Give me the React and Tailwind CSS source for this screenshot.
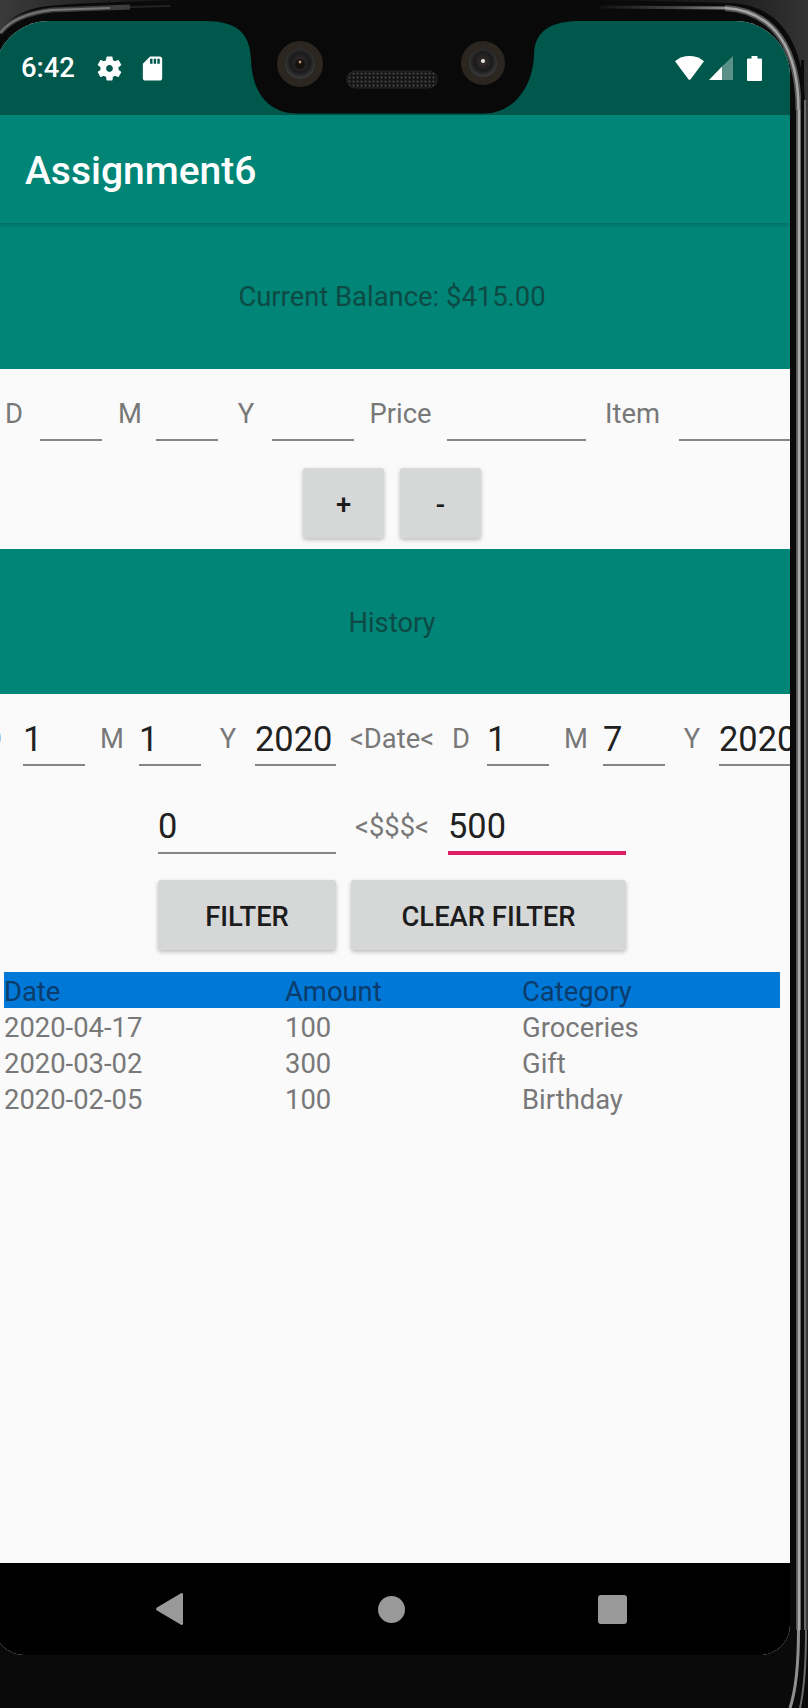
import React from 'react';

const rows = [
  { date: '2020-04-17', amount: '100', category: 'Groceries' },
  { date: '2020-03-02', amount: '300', category: 'Gift' },
  { date: '2020-02-05', amount: '100', category: 'Birthday' },
];

const Label = ({ className = 'w-[54px] justify-center', children }) => (
  <div className={`flex shrink-0 self-end mb-[11px] text-[27.4px] leading-[32px] text-[#787878] ${className}`}>{children}</div>
);

const Field = ({ width, value, focused, lead = 'leading-[40px]' }) => (
  <div
    className={`shrink-0 self-end h-[47px] text-[34.4px] text-[#212121] whitespace-nowrap overflow-hidden ${lead} ${width} ${
      focused ? 'border-b-4 border-[#e01e63] -mb-px' : 'border-b-2 border-[#858585]'
    }`}
  >
    {value}
  </div>
);

const ActionButton = ({ width, children }) => (
  <button className={`h-[70px] pt-[5px] rounded-[3px] bg-[#d6d7d7] text-[27.4px] font-medium text-[#1c1c1c] shadow-[0_2px_4px_rgba(0,0,0,0.25)] ${width}`}>
    {children}
  </button>
);

const DeviceFrame = () => (
  <svg className="absolute left-0 top-0 pointer-events-none" width="808" height="1708" viewBox="0 0 808 1708" fill="none">
    <defs>
      <linearGradient id="fadeLeft" x1="0" y1="0" x2="1" y2="0">
        <stop offset="0" stopColor="#111" />
        <stop offset="0.6" stopColor="#444" />
        <stop offset="1" stopColor="#8a8a8a" />
      </linearGradient>
      <linearGradient id="topLeft" x1="0" y1="0" x2="1" y2="0">
        <stop offset="0" stopColor="#3a3a3a" />
        <stop offset="1" stopColor="#0d0d0d" />
      </linearGradient>
      <linearGradient id="topRight" x1="0" y1="0" x2="1" y2="0">
        <stop offset="0" stopColor="#0d0d0d" />
        <stop offset="0.7" stopColor="#222" />
        <stop offset="1" stopColor="#333" />
      </linearGradient>
      <pattern id="mesh" width="4" height="4" patternUnits="userSpaceOnUse">
        <rect width="4" height="4" fill="#161616" />
        <circle cx="1.5" cy="1.5" r="1" fill="#4a4a4a" />
      </pattern>
      <radialGradient id="lens" cx="0.5" cy="0.45" r="0.55">
        <stop offset="0" stopColor="#3a3230" />
        <stop offset="0.6" stopColor="#1b1a1c" />
        <stop offset="1" stopColor="#3d3d40" />
      </radialGradient>
    </defs>

    {/* notch */}
    <path
      d="M205 21 H580 C552 21 534 30 534 56 C532 90 512 113 484 113.5 H296 C268 113 252 92 251 60 C250 32 236 21 205 21 Z"
      fill="#090909"
    />
    <rect x="347" y="71" width="90" height="17" rx="8" fill="url(#mesh)" stroke="#262626" />
    <circle cx="300" cy="64" r="23" fill="#2b261f" />
    <circle cx="300" cy="64" r="15" fill="url(#lens)" />
    <circle cx="300" cy="64" r="5" fill="#15110f" />
    <circle cx="300" cy="62" r="1.4" fill="#c09070" />
    <circle cx="483" cy="63" r="22" fill="#2b261f" />
    <circle cx="483" cy="63" r="14" fill="url(#lens)" />
    <circle cx="483" cy="61" r="2" fill="#e8e8e8" />

    {/* corners of the case */}
    <path d="M0 0 H190 C120 2 60 3 36 8 C20 12 8 20 0 30 Z" fill="url(#topLeft)" />
    <path d="M600 0 H808 V108 H805 C805 50 785 5 730 3 Z" fill="url(#topRight)" />
    <path d="M0 33 C10 20 26 13 52 10 L130 7" stroke="#3e3e3e" strokeWidth="5" />
    <path d="M0 33 C10 20 26 13 52 10 L110 8" stroke="#777" strokeWidth="2" />
    <path d="M130 7 L170 6" stroke="#222" strokeWidth="2" />
    <path d="M600 7 L725 8" stroke="url(#fadeLeft)" strokeWidth="3" />
    <path d="M725 8 C775 11 798.5 50 798.5 110" stroke="#555" strokeWidth="6" />
    <path d="M725 8 C775 11 798.5 50 798.5 110" stroke="#a5a5a5" strokeWidth="2.5" />

    {/* right edge */}
    <rect x="796" y="110" width="1.5" height="1520" fill="#555" />
    <rect x="797.5" y="110" width="2.500" height="1520" fill="#a8a8a8" />
    <rect x="800" y="110" width="1" height="1520" fill="#666" />
    <rect x="801" y="60" width="3" height="1570" fill="#0b0b0b" />
    <rect x="804" y="100" width="2" height="1530" fill="#6a6a6a" />
    <rect x="806" y="100" width="2" height="1530" fill="#3a3a3a" />
    <path d="M798.500 1630 C798.500 1665 796 1690 790 1708" stroke="#8f8f8f" strokeWidth="3" />
    <path d="M806 1630 C806 1665 804 1690 800 1708" stroke="#6a6a6a" strokeWidth="2" />
  </svg>
);

function App() {
  return (
    <div className="relative w-[808px] h-[1708px] overflow-hidden bg-[#0a0a0a] font-[Roboto,sans-serif]">
      <div className="flex flex-col mt-[21px] -ml-[6px] w-[796px] h-[1634px] overflow-hidden rounded-t-[55px] rounded-b-[30px] bg-[#fafafa]">
        {/* Status bar */}
        <div className="flex items-center h-[94px] shrink-0 pl-[27px] pr-[28px] bg-[#00574b] text-white">
          <span className="pt-[2px] text-[27.4px] font-medium leading-none">6:42</span>
          <svg className="ml-[20px]" width="29" height="29" viewBox="0 0 24 24" fill="#fff">
            <path d="M19.43 12.98c.04-.32.07-.64.07-.98s-.03-.66-.07-.98l2.11-1.65c.19-.15.24-.42.12-.64l-2-3.46c-.12-.22-.39-.3-.61-.22l-2.49 1c-.52-.4-1.08-.73-1.69-.98l-.38-2.65C14.46 2.18 14.25 2 14 2h-4c-.25 0-.46.18-.49.42l-.38 2.65c-.61.25-1.17.59-1.69.98l-2.49-1c-.23-.09-.49 0-.61.22l-2 3.46c-.13.22-.07.49.12.64l2.11 1.65c-.04.32-.07.65-.07.98s.03.66.07.98l-2.11 1.65c-.19.15-.24.42-.12.64l2 3.46c.12.22.39.3.61.22l2.49-1c.52.4 1.08.73 1.69.98l.38 2.65c.03.24.24.42.49.42h4c.25 0 .46-.18.49-.42l.38-2.65c.61-.25 1.17-.59 1.69-.98l2.49 1c.23.09.49 0 .61-.22l2-3.46c.12-.22.07-.49-.12-.64l-2.11-1.65zM12 14.800c-1.55 0-2.800-1.250-2.800-2.800s1.250-2.800 2.800-2.800 2.800 1.250 2.800 2.800-1.250 2.800-2.800 2.800z" />
          </svg>
          <svg className="ml-[14px]" width="29" height="29" viewBox="0 0 24 24" fill="#fff">
            <path d="M18 2h-8L4.02 8 4 20c0 1.1.9 2 2 2h12c1.1 0 2-.9 2-2V4c0-1.1-.9-2-2-2zm-6 6h-2V4h2v4zm3 0h-2V4h2v4zm3 0h-2V4h2v4z" />
          </svg>
          <svg className="ml-auto" width="29" height="24" viewBox="0 0 29 24" fill="#fff">
            <path d="M14.5 0C9 0 4 1.8 0 5.2L13.6 23.4c.5.6 1.3.6 1.8 0L29 5.2C25 1.8 20 0 14.5 0z" />
          </svg>
          <svg className="ml-[5px]" width="24" height="24" viewBox="0 0 24 24">
            <path d="M13 10.5V24H0z" fill="#fff" />
            <path d="M13 10.5L24 0v24H13z" fill="#fff" fillOpacity="0.35" />
          </svg>
          <svg className="ml-[14px]" width="15" height="25" viewBox="0 0 15 25" fill="#fff">
            <path d="M4.5 0h6v2.5H14a1 1 0 0 1 1 1V24a1 1 0 0 1-1 1H1a1 1 0 0 1-1-1V3.500a1 1 0 0 1 1-1h3.500z" />
          </svg>
        </div>

        {/* App bar */}
        <div className="relative flex items-center h-[108px] shrink-0 pl-[31px] pt-[4px] bg-[#008577] shadow-[0_2px_4px_rgba(0,0,0,0.2)]">
          <span className="text-[39px] font-medium leading-none text-white">Assignment6</span>
        </div>

        {/* Balance */}
        <div className="flex items-center justify-center h-[146px] shrink-0 pt-[4px] bg-[#008577] text-[27.4px] text-[#0e4a44]">
          Current Balance: $415.00
        </div>

        {/* Add entry */}
        <div className="h-[180px] shrink-0 pl-[6px]">
          <div className="flex h-[72px]">
            <Label className="w-[40px] pl-[5px]">D</Label>
            <Field width="w-[62px]" />
            <Label className="w-[54px] justify-center pl-[2px]">M</Label>
            <Field width="w-[62px]" />
            <Label className="w-[54px] justify-center pl-[2px]">Y</Label>
            <Field width="w-[82px]" />
            <Label className="w-[93px] justify-center">Price</Label>
            <Field width="w-[139px]" />
            <Label className="w-[93px] justify-center">Item</Label>
            <Field width="w-[120px]" />
          </div>
          <div className="flex gap-[16px] mt-[27px] pl-[303px]">
            <ActionButton width="w-[81px]">+</ActionButton>
            <ActionButton width="w-[81px]">-</ActionButton>
          </div>
        </div>

        {/* History */}
        <div className="flex items-center justify-center h-[145px] shrink-0 pt-[4px] bg-[#008577] text-[27.4px] text-[#0e4a44]">
          History
        </div>

        {/* Filter */}
        <div className="pl-[6px]">
          <div className="flex h-[72px]">
            <Label className="w-[39px] -ml-[16px]">D</Label>
            <Field width="w-[62px]" value="1" />
            <Label>M</Label>
            <Field width="w-[62px]" value="1" />
            <Label>Y</Label>
            <Field width="w-[81px]" value="2020" />
            <Label className="w-[112px] justify-center text-[24px]">&lt;Date&lt;</Label>
            <Label className="w-[39px] pl-[4px]">D</Label>
            <Field width="w-[62px]" value="1" />
            <Label>M</Label>
            <Field width="w-[62px]" value="7" />
            <Label>Y</Label>
            <Field width="w-[81px]" value="2020" />
          </div>
          <div className="flex h-[88px] pl-[158px]">
            <Field width="w-[178px]" value="0" lead="leading-[38px]" />
            <Label className="w-[112px] justify-center text-[24px]">&lt;$$$&lt;</Label>
            <Field width="w-[178px]" value="500" lead="leading-[36px]" focused />
          </div>
          <div className="flex gap-[15px] mt-[26px] pl-[158px]">
            <ActionButton width="w-[178px]">FILTER</ActionButton>
            <ActionButton width="w-[275px]">CLEAR FILTER</ActionButton>
          </div>
        </div>

        {/* Table */}
        <div className="mt-[22px] ml-[10px] w-[776px] text-[27.4px] leading-[36px] text-[#787878]">
          <div className="grid grid-cols-[281px_237px_1fr] h-[36px] pt-[2px] bg-[#0078d7] text-[#0b3c6b]">
            <div>Date</div>
            <div>Amount</div>
            <div>Category</div>
          </div>
          {rows.map((row) => (
            <div key={row.date} className="grid grid-cols-[281px_237px_1fr] h-[36px] pt-[2px]">
              <div>{row.date}</div>
              <div>{row.amount}</div>
              <div>{row.category}</div>
            </div>
          ))}
        </div>

        {/* Nav bar */}
        <div className="flex items-center mt-auto h-[92px] shrink-0 bg-black pl-[162px]">
          <svg width="27" height="32" viewBox="0 0 27 32" fill="#999">
            <path d="M25 .3c1-.6 2 0 2 1.200v29c0 1.200-1 1.800-2 1.200L1 17.500c-1.300-.9-1.300-2.100 0-3z" />
          </svg>
          <svg className="ml-[195px]" width="27" height="27" viewBox="0 0 27 27" fill="#999">
            <circle cx="13.5" cy="13.5" r="13.5" />
          </svg>
          <svg className="ml-[193px]" width="29" height="29" viewBox="0 0 29 29" fill="#999">
            <rect width="29" height="29" rx="3" />
          </svg>
        </div>
      </div>
      <DeviceFrame />
    </div>
  );
}

export default App;
